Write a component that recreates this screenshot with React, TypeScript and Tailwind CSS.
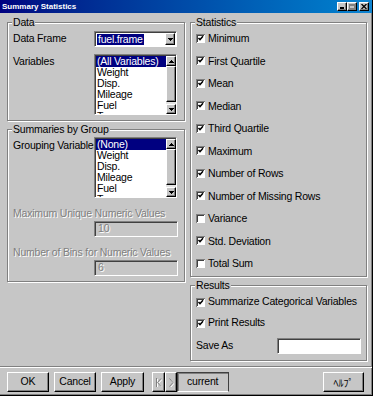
import React from "react";

const raised =
  "border border-t-white border-l-white border-r-black border-b-black shadow-[inset_-1px_-1px_0_#808080]";
const sunken =
  "border border-t-[#808080] border-l-[#808080] border-r-white border-b-white shadow-[inset_1px_1px_0_#404040]";
const etched = "border border-[#808080] shadow-[1px_1px_0_#fff,inset_1px_1px_0_#fff]";
const dim = "text-[#808080] [text-shadow:1px_1px_0_#fff]";

const variables = ["(All Variables)", "Weight", "Disp.", "Mileage", "Fuel", "Type"];
const groups = ["(None)", "Weight", "Disp.", "Mileage", "Fuel", "Type"];

const stats = [
  { label: "Minimum", on: true },
  { label: "First Quartile", on: true },
  { label: "Mean", on: true },
  { label: "Median", on: true },
  { label: "Third Quartile", on: true },
  { label: "Maximum", on: true },
  { label: "Number of Rows", on: true },
  { label: "Number of Missing Rows", on: true },
  { label: "Variance", on: false },
  { label: "Std. Deviation", on: true },
  { label: "Total Sum", on: false },
];

function Legend({ children }: { children: React.ReactNode }) {
  return (
    <span className="-mt-[7px] ml-[4px] px-[1px] w-fit bg-[#c6c6c6] leading-[12px] whitespace-nowrap">
      {children}
    </span>
  );
}

function Arrow({ down }: { down?: boolean }) {
  return (
    <svg width="5" height="3" viewBox="0 0 5 3" className={down ? "rotate-180" : ""}>
      <path d="M2 0h1v1h1v1h1v1H0V2h1V1h1z" fill="#000" />
    </svg>
  );
}

function CheckBox({ on }: { on: boolean }) {
  return (
    <svg width="9" height="9" viewBox="0 0 9 9" className="shrink-0">
      <rect width="9" height="9" fill="#fff" />
      <path d="M0 0.5H9M0.5 0V9" stroke="#808080" />
      <path d="M1 1.5H8M1.5 1V8" stroke="#404040" />
      {on && <path d="M2.5 4L4 5.6L7 2.3" stroke="#000" strokeWidth="1.5" fill="none" />}
    </svg>
  );
}

function ListBox({ items }: { items: string[] }) {
  return (
    <div className={`relative w-[83px] h-[61px] bg-white flex overflow-hidden pt-[1px] pl-[1px] ${sunken}`}>
      <div className="flex-1 flex flex-col overflow-hidden">
        {items.map((item, i) => (
          <div
            key={item}
            className={`h-[11px] leading-[11px] pl-[1px] shrink-0 whitespace-nowrap ${
              i === 0 ? "bg-[#000080] text-white" : ""
            }`}
          >
            {item}
          </div>
        ))}
      </div>
      <div className="w-[10px] flex flex-col bg-[#e4e4e4]">
        <div className={`h-[10px] flex items-center justify-center bg-[#c6c6c6] ${raised}`}>
          <Arrow />
        </div>
        <div className={`h-[36px] bg-[#c6c6c6] ${raised}`} />
        <div className="flex-1" />
        <div className={`h-[10px] flex items-center justify-center bg-[#c6c6c6] ${raised}`}>
          <Arrow down />
        </div>
      </div>
    </div>
  );
}

function Button({ w, children }: { w: string; children: React.ReactNode }) {
  return (
    <div className={`${w} h-[20px] flex items-center justify-center bg-[#c6c6c6] ${raised}`}>
      {children}
    </div>
  );
}

export default function App() {
  return (
    <div className="w-[373px] h-[396px] bg-[#c6c6c6] text-black text-[10.5px] tracking-[-0.2px] font-['Liberation_Sans',Arial,sans-serif] flex flex-col border-r border-b border-r-black border-b-black shadow-[inset_-1px_-1px_0_#808080] overflow-hidden">
      {/* title bar */}
      <div className="h-[13px] shrink-0 flex items-center bg-linear-to-r from-[#000080] to-[#1084d0] pl-[2px] pr-[3px]">
        <span className="text-white text-[8px] font-bold tracking-normal leading-[13px]">
          Summary Statistics
        </span>
        <div className="ml-auto flex items-center">
          <div className={`w-[10px] h-[9px] bg-[#c6c6c6] flex items-end justify-center pb-[1px] ${raised}`}>
            <div className="w-[4px] h-[2px] bg-black" />
          </div>
          <div className={`w-[10px] h-[9px] bg-[#c6c6c6] flex items-center justify-center ${raised}`}>
            <div className="w-[6px] h-[5px] border border-t-2 border-[#808080]" />
          </div>
          <div className={`ml-[2px] w-[10px] h-[9px] bg-[#c6c6c6] flex items-center justify-center ${raised}`}>
            <svg width="6" height="5" viewBox="0 0 6 5">
              <path d="M0.5 0L5.5 5M5.5 0L0.5 5" stroke="#000" strokeWidth="1.3" />
            </svg>
          </div>
        </div>
      </div>

      {/* main */}
      <div className="flex gap-[5px] pl-[7px] pt-[9px]">
        <div className="w-[178px] flex flex-col gap-[8px]">
          <div className={`h-[99px] flex flex-col ${etched}`}>
            <Legend>Data</Legend>
            <div className="mt-[3px] flex items-center">
              <span className="w-[86px] pl-[5px] whitespace-nowrap">Data Frame</span>
              <div className={`w-[83px] h-[16px] bg-white flex items-center pl-[2px] pr-[1px] ${sunken}`}>
                <span className="bg-[#000080] text-white leading-[11px] px-[1px]">fuel.frame</span>
                <div className={`ml-auto w-[10px] h-[12px] bg-[#c6c6c6] flex items-center justify-center ${raised}`}>
                  <Arrow down />
                </div>
              </div>
            </div>
            <div className="mt-[7px] flex items-start">
              <span className="w-[86px] pl-[5px] pt-[1px] leading-[12px]">Variables</span>
              <ListBox items={variables} />
            </div>
          </div>

          <div className={`h-[153px] flex flex-col ${etched}`}>
            <Legend>Summaries by Group</Legend>
            <div className="mt-[2px] flex items-start">
              <span className="w-[86px] pl-[5px] pt-[2px] leading-[12px] whitespace-nowrap overflow-hidden">
                Grouping Variables
              </span>
              <ListBox items={groups} />
            </div>
            <span className={`mt-[9px] pl-[5px] leading-[12px] whitespace-nowrap ${dim}`}>
              Maximum Unique Numeric Values
            </span>
            <div className={`mt-[2px] ml-[86px] w-[84px] h-[16px] flex items-center pl-[3px] ${sunken}`}>
              <span className={dim}>10</span>
            </div>
            <span className={`mt-[9px] pl-[5px] leading-[12px] whitespace-nowrap ${dim}`}>
              Number of Bins for Numeric Values
            </span>
            <div className={`mt-[2px] ml-[86px] w-[84px] h-[16px] flex items-center pl-[3px] ${sunken}`}>
              <span className={dim}>6</span>
            </div>
          </div>
        </div>

        <div className="w-[177px] flex flex-col gap-[8px]">
          <div className={`h-[255px] flex flex-col ${etched}`}>
            <Legend>Statistics</Legend>
            <div className="flex-1 flex flex-col justify-between pt-[4px] pb-[7px] pl-[5px]">
              {stats.map((s) => (
                <div key={s.label} className="h-[12px] flex items-center gap-[3px] leading-[12px] whitespace-nowrap">
                  <CheckBox on={s.on} />
                  <span>{s.label}</span>
                </div>
              ))}
            </div>
          </div>

          <div className={`h-[76px] flex flex-col ${etched}`}>
            <Legend>Results</Legend>
            <div className="mt-[5px] pl-[5px] h-[12px] flex items-center gap-[3px] whitespace-nowrap">
              <CheckBox on />
              <span>Summarize Categorical Variables</span>
            </div>
            <div className="mt-[9px] pl-[5px] h-[12px] flex items-center gap-[3px] whitespace-nowrap">
              <CheckBox on />
              <span>Print Results</span>
            </div>
            <div className="mt-[9px] pl-[5px] pr-[5px] flex items-center">
              <span>Save As</span>
              <div className={`ml-auto w-[84px] h-[16px] bg-white ${sunken}`} />
            </div>
          </div>
        </div>
      </div>

      {/* separator */}
      <div className="mt-[5px] h-[2px] border-t border-t-[#808080] border-b border-b-white" />

      {/* buttons */}
      <div className="mt-[4px] pl-[7px] pr-[8px] flex items-center">
        <Button w="w-[42px]">OK</Button>
        <div className="ml-[5px]">
          <Button w="w-[42px]">Cancel</Button>
        </div>
        <div className="ml-[5px]">
          <Button w="w-[43px]">Apply</Button>
        </div>
        <div className="ml-[8px] flex">
          <Button w="w-[13px]">
            <svg width="7" height="9" viewBox="0 0 7 9">
              <path d="M1.5 0V9M6 0.5L2.5 4.5L6 8.5" stroke="#fff" fill="none" transform="translate(1 1)" />
              <path d="M1.5 0V9M6 0.5L2.5 4.5L6 8.5" stroke="#808080" fill="none" />
            </svg>
          </Button>
          <Button w="w-[12px]">
            <svg width="5" height="9" viewBox="0 0 5 9">
              <path d="M0.5 0.5L4 4.5L0.5 8.5" stroke="#fff" fill="none" transform="translate(1 1)" />
              <path d="M0.5 0.5L4 4.5L0.5 8.5" stroke="#808080" fill="none" />
            </svg>
          </Button>
          <div className="w-[52px] h-[20px] border border-t-[#404040] border-l-[#404040] border-r-[#404040] border-b-white shadow-[inset_1px_1px_0_#808080] pl-[9px] flex items-center leading-[12px] pb-[2px]">
            current
          </div>
        </div>
        <div className="ml-auto">
          <Button w="w-[41px]">
            <span className="font-['Noto_Sans_CJK_JP',sans-serif] text-[10px] tracking-normal">ﾍﾙﾌﾟ</span>
          </Button>
        </div>
      </div>
    </div>
  );
}
